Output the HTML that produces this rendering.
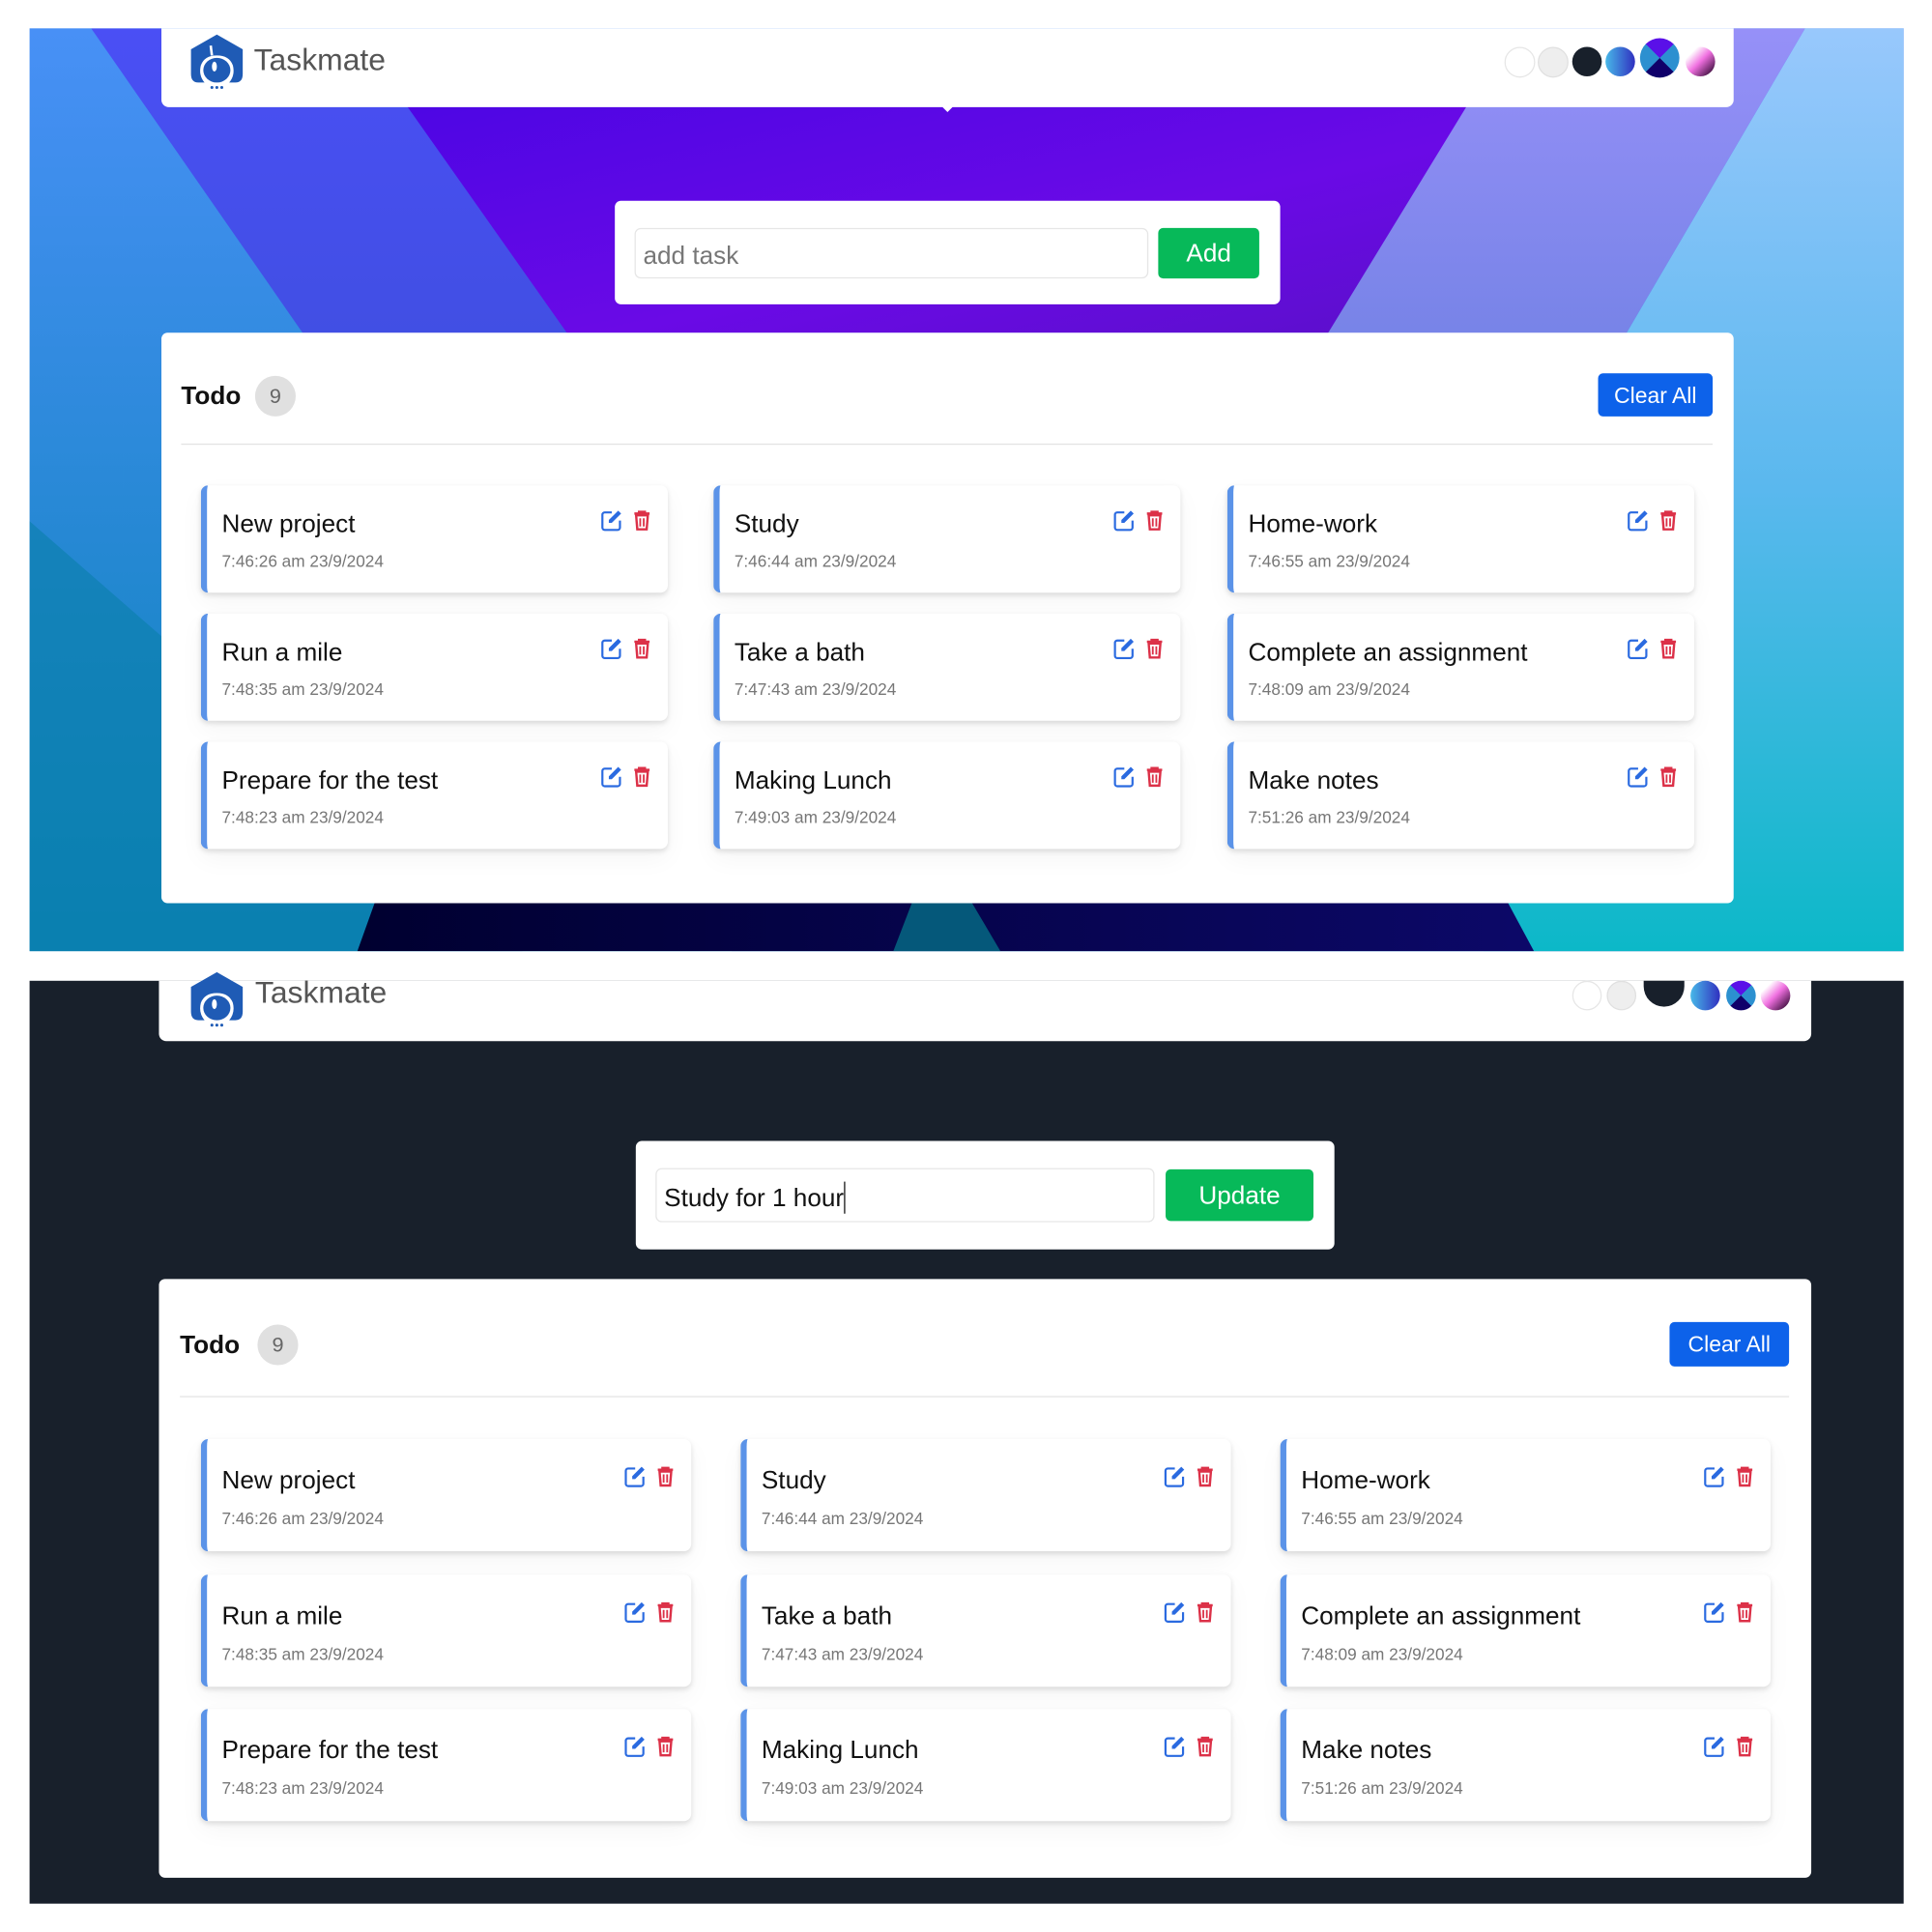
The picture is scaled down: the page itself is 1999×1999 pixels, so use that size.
<!DOCTYPE html>
<html><head><meta charset="utf-8"><style>
*{box-sizing:border-box;margin:0;padding:0}
body{width:1999px;height:1999px;overflow:hidden;background:#fff;font-family:"Liberation Sans",sans-serif}
#w{position:absolute;left:0;top:0;width:1568px;height:1568px;transform:scale(1.27487);transform-origin:0 0}
.a{position:absolute}
.card{position:absolute;background:#fff;border-radius:6px;box-shadow:0 2px 4px rgba(0,0,0,.12),0 8px 20px rgba(0,0,0,.04);border-left:5px solid #5b93e8}
.card .t{position:absolute;left:12px;font-size:20.5px;color:#111;white-space:nowrap}
.card .d{position:absolute;left:12px;font-size:13.5px;color:#777;white-space:nowrap}
.card svg{position:absolute;width:19px;height:19px}
.dot{position:absolute;border-radius:50%}
.logo{position:absolute}
</style></head><body><div id="w">

<div class="a" style="left:24px;top:23px;width:1521px;height:749px;overflow:hidden;background:linear-gradient(180deg,#4890f6,#0a82b8)">
<svg class="a" style="left:0;top:0" width="1521" height="749" viewBox="0 0 1521 749">
<defs>
<linearGradient id="g1" x1="0" y1="0" x2="0" y2="1"><stop offset="0" stop-color="#4a4ff5"/><stop offset="1" stop-color="#2f4fc0"/></linearGradient>
<linearGradient id="g2" x1="0" y1="0" x2="1" y2="1"><stop offset="0" stop-color="#4a05e4"/><stop offset=".6" stop-color="#6a0ae6"/><stop offset="1" stop-color="#5a10c8"/></linearGradient>
<linearGradient id="g3" x1="0" y1="0" x2="0" y2="1"><stop offset="0" stop-color="#9690f8"/><stop offset="1" stop-color="#6a7ee0"/></linearGradient>
<linearGradient id="g4" x1="0" y1="0" x2="0" y2="1"><stop offset="0" stop-color="#98c8fc"/><stop offset=".5" stop-color="#5ab8ee"/><stop offset="1" stop-color="#0cb8c8"/></linearGradient>
<linearGradient id="g5" x1="0" y1="0" x2="1" y2="0"><stop offset="0" stop-color="#000030"/><stop offset="1" stop-color="#0c0868"/></linearGradient>
</defs>
<polygon points="50,0 1521,0 1521,749 570,749" fill="url(#g1)"/>
<polygon points="290,40 1210,40 1054,247 436,247" fill="url(#g2)"/>
<polygon points="1205,0 1441,0 1230,360 1000,360 1054,247" fill="url(#g3)"/>
<polygon points="1441,0 1521,0 1521,749 1180,749 1180,380 1230,360" fill="url(#g4)"/>
<polygon points="0,400 400,749 0,749" fill="#0a7eaa" opacity=".6"/>
<polygon points="280,710 1200,710 1221,749 266,749" fill="url(#g5)"/>
<polygon points="716,710 765,710 788,749 701,749" fill="#05587a"/>
</svg>
</div>

<div class="a" style="left:131px;top:23px;width:1276px;height:64px;background:#fff;border-radius:0 0 6px 6px"></div>
<svg class="logo" style="left:153px;top:27px" width="46" height="46" viewBox="0 0 46 46">
<path d="M23 1 L44 13 V33 Q44 40 38 40 L33 40 Q38 34 36 26 Q33 18 23 18 Q13 18 10 26 Q8 34 13 40 L8 40 Q2 40 2 33 V13 Z" fill="#1f5bb5"/>
<ellipse cx="23" cy="30" rx="11" ry="10" fill="#1f5bb5"/><ellipse cx="21" cy="27" rx="2" ry="4" fill="#fff"/>
<line x1="18" y1="10" x2="19" y2="18" stroke="#fff" stroke-width="2"/>
<circle cx="19" cy="44" r="1.2" fill="#1f5bb5"/><circle cx="23" cy="44" r="1.2" fill="#1f5bb5"/><circle cx="27" cy="44" r="1.2" fill="#1f5bb5"/>
</svg>
<div class="a" style="left:206px;top:35px;font-size:25px;color:#555">Taskmate</div>
<div class="dot" style="left:1221px;top:38px;width:25px;height:25px;background:#fff;border:1px solid #e6e6e6"></div>
<div class="dot" style="left:1248px;top:38px;width:25px;height:25px;background:#eee;border:1px solid #e0e0e0"></div>
<div class="dot" style="left:1276px;top:38px;width:24px;height:24px;background:#18202b"></div>
<div class="dot" style="left:1303px;top:38px;width:24px;height:24px;background:linear-gradient(90deg,#48b8e8,#3030c0)"></div>
<div class="dot" style="left:1331px;top:31px;width:32px;height:32px;background:conic-gradient(#5a10e8 0 45deg,#2c90d0 45deg 135deg,#10006a 135deg 225deg,#2c90d0 225deg 315deg,#5a10e8 315deg)"></div>
<div class="dot" style="left:1368px;top:38px;width:24px;height:24px;background:linear-gradient(135deg,#fff 20%,#f070e0 50%,#401040 90%)"></div>
<div class="a" style="left:764px;top:86px;width:0;height:0;border-left:5px solid transparent;border-right:5px solid transparent;border-top:5px solid #fff"></div>

<div class="a" style="left:499px;top:163px;width:540px;height:84px;background:#fff;border-radius:5px"></div>
<div class="a" style="left:515px;top:185px;width:417px;height:41px;border:1px solid #e6e6e6;border-radius:5px;font-size:20.5px;color:#777;padding:10px 6px">add task</div>
<div class="a" style="left:940px;top:185px;width:82px;height:41px;background:#07b959;border-radius:4px;color:#fff;font-size:20.5px;text-align:center;line-height:42px">Add</div>

<div class="a" style="left:131px;top:270px;width:1276px;height:463px;background:#fff;border-radius:5px"></div>
<div class="a" style="left:147px;top:310px;font-size:20.5px;font-weight:bold;color:#111">Todo</div>
<div class="dot" style="left:207px;top:305px;width:33px;height:33px;background:#e0e0e0;color:#666;font-size:17px;text-align:center;line-height:33px">9</div>
<div class="a" style="left:1297px;top:303px;width:93px;height:35px;background:#0d62ea;border-radius:4px;color:#fff;font-size:18px;text-align:center;line-height:36px">Clear All</div>
<div class="a" style="left:147px;top:360px;width:1243px;height:1px;background:#e3e3e3"></div>

<div id="top"></div>

<div class="a" style="left:24px;top:796px;width:1521px;height:749px;background:#18202b"></div>
<div class="a" style="left:129px;top:796px;width:1341px;height:49px;background:#fff;border-radius:0 0 6px 6px"></div>
<svg class="logo" style="left:153px;top:788px" width="46" height="46" viewBox="0 0 46 46">
<path d="M23 1 L44 13 V33 Q44 40 38 40 L33 40 Q38 34 36 26 Q33 18 23 18 Q13 18 10 26 Q8 34 13 40 L8 40 Q2 40 2 33 V13 Z" fill="#1f5bb5"/>
<ellipse cx="23" cy="30" rx="11" ry="10" fill="#1f5bb5"/><ellipse cx="21" cy="27" rx="2" ry="4" fill="#fff"/>
<circle cx="19" cy="44" r="1.2" fill="#1f5bb5"/><circle cx="23" cy="44" r="1.2" fill="#1f5bb5"/><circle cx="27" cy="44" r="1.2" fill="#1f5bb5"/>
</svg>
<div class="a" style="left:207px;top:792px;font-size:25px;color:#555">Taskmate</div>
<div class="dot" style="left:1276px;top:796px;width:24px;height:24px;background:#fff;border:1px solid #e6e6e6"></div>
<div class="dot" style="left:1304px;top:796px;width:24px;height:24px;background:#eee;border:1px solid #e0e0e0"></div>
<div class="a" style="left:1334px;top:796px;width:33px;height:21px;background:#18202b;border-radius:0 0 17px 17px"></div>
<div class="dot" style="left:1372px;top:796px;width:24px;height:24px;background:linear-gradient(90deg,#48b8e8,#3030c0)"></div>
<div class="dot" style="left:1401px;top:796px;width:24px;height:24px;background:conic-gradient(#5a10e8 0 45deg,#2c90d0 45deg 135deg,#10006a 135deg 225deg,#2c90d0 225deg 315deg,#5a10e8 315deg)"></div>
<div class="dot" style="left:1429px;top:796px;width:24px;height:24px;background:linear-gradient(135deg,#fff 20%,#f070e0 50%,#401040 90%)"></div>

<div class="a" style="left:516px;top:926px;width:567px;height:88px;background:#fff;border-radius:5px"></div>
<div class="a" style="left:532px;top:948px;width:405px;height:44px;border:1px solid #e6e6e6;border-radius:5px;font-size:20.5px;color:#111;padding:10px 6px">Study for 1 hour<span style="display:inline-block;width:1px;height:26px;background:#111;vertical-align:-6px"></span></div>
<div class="a" style="left:946px;top:949px;width:120px;height:42px;background:#07b959;border-radius:4px;color:#fff;font-size:20.5px;text-align:center;line-height:43px">Update</div>

<div class="a" style="left:129px;top:1038px;width:1341px;height:486px;background:#fff;border-radius:5px"></div>
<div class="a" style="left:146px;top:1080px;font-size:20.5px;font-weight:bold;color:#111">Todo</div>
<div class="dot" style="left:209px;top:1075px;width:33px;height:33px;background:#e0e0e0;color:#666;font-size:17px;text-align:center;line-height:33px">9</div>
<div class="a" style="left:1355px;top:1073px;width:97px;height:36px;background:#0d62ea;border-radius:4px;color:#fff;font-size:18px;text-align:center;line-height:37px">Clear All</div>
<div class="a" style="left:146px;top:1133px;width:1306px;height:1px;background:#e3e3e3"></div>

<div id="bot"></div>
</div>
<script>
var tasks=[["New project","7:46:26 am 23/9/2024"],["Study","7:46:44 am 23/9/2024"],["Home-work","7:46:55 am 23/9/2024"],["Run a mile","7:48:35 am 23/9/2024"],["Take a bath","7:47:43 am 23/9/2024"],["Complete an assignment","7:48:09 am 23/9/2024"],["Prepare for the test","7:48:23 am 23/9/2024"],["Making Lunch","7:49:03 am 23/9/2024"],["Make notes","7:51:26 am 23/9/2024"]];
var ed='<path d="M10 3H4a2 2 0 0 0-2 2v11a2 2 0 0 0 2 2h11a2 2 0 0 0 2-2v-6" fill="none" stroke="#2a6ae0" stroke-width="1.8"/><path d="M15.5 1.5l2.5 2.5-8 8H7.5V9.5z" fill="#2a6ae0"/>';
var tr='<path d="M3 4h13M7 4V2.5h5V4" stroke="#dc3148" stroke-width="2" fill="none"/><path d="M4.5 5.5h10l-1 12h-8z" fill="none" stroke="#dc3148" stroke-width="2"/><path d="M8 8v7M11 8v7" stroke="#dc3148" stroke-width="1.5"/>';
function build(id,cols,rows,w,h,ty,dy){var s='';for(var i=0;i<9;i++){var L=cols[i%3],T=rows[Math.floor(i/3)];
s+='<div class="card" style="left:'+L+'px;top:'+T+'px;width:'+w+'px;height:'+h+'px"><div class="t" style="top:'+(ty-10)+'px">'+tasks[i][0]+'</div><div class="d" style="top:'+(dy-7)+'px">'+tasks[i][1]+'</div><svg viewBox="0 0 20 20" style="left:'+(w-60)+'px;top:'+(ty-11)+'px">'+ed+'</svg><svg viewBox="0 0 20 20" style="left:'+(w-35)+'px;top:'+(ty-11)+'px">'+tr+'</svg></div>';}
document.getElementById(id).outerHTML=s;}
build('top',[163,579,996],[394,498,602],379,87,30,61);
build('bot',[163,601,1039],[1168,1278,1387],398,91,32,64);
</script>
</body></html>
